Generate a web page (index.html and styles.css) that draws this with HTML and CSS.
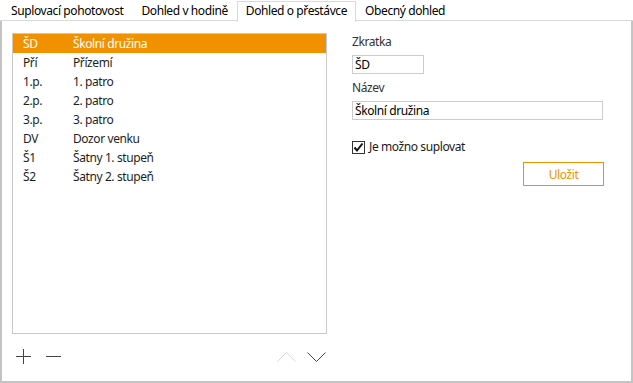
FILE: index.html
```html
<!DOCTYPE html>
<html lang="cs">
<head>
    <meta charset="UTF-8">
    <title>Dohled o přestávce</title>
    <link rel="stylesheet" href="styles.css">
</head>
<body>
    <div class="window">
        <div class="tabs">
            <div class="tab">Suplovací pohotovost</div>
            <div class="tab">Dohled v hodině</div>
            <div class="tab active">Dohled o přestávce</div>
            <div class="tab">Obecný dohled</div>
        </div>

        <div class="page">
            <div class="list-pane">
                <div class="list">
                    <div class="row selected"><span class="code">ŠD</span><span>Školní družina</span></div>
                    <div class="row"><span class="code">Pří</span><span>Přízemí</span></div>
                    <div class="row"><span class="code">1.p.</span><span>1. patro</span></div>
                    <div class="row"><span class="code">2.p.</span><span>2. patro</span></div>
                    <div class="row"><span class="code">3.p.</span><span>3. patro</span></div>
                    <div class="row"><span class="code">DV</span><span>Dozor venku</span></div>
                    <div class="row"><span class="code">Š1</span><span>Šatny 1. stupeň</span></div>
                    <div class="row"><span class="code">Š2</span><span>Šatny 2. stupeň</span></div>
                </div>

                <div class="list-tools">
                    <!-- add / remove -->
                    <button class="icon-btn add" title="Přidat">
                        <svg width="15" height="15" viewBox="0 0 15 15"><path d="M0 7.5H15M7.5 0V15" stroke="#444" stroke-width="1" fill="none"/></svg>
                    </button>
                    <button class="icon-btn remove" title="Odebrat">
                        <svg width="15" height="15" viewBox="0 0 15 15"><path d="M0 7.5H15" stroke="#444" stroke-width="1" fill="none"/></svg>
                    </button>
                    <!-- move up / down -->
                    <button class="icon-btn up" title="Nahoru" disabled>
                        <svg width="19" height="10" viewBox="0 0 19 10"><path d="M0.5 9.5L9.5 0.5L18.5 9.5" stroke="#d6d6d6" stroke-width="1" fill="none"/></svg>
                    </button>
                    <button class="icon-btn down" title="Dolů">
                        <svg width="19" height="10" viewBox="0 0 19 10"><path d="M0.5 0.5L9.5 9.5L18.5 0.5" stroke="#444" stroke-width="1" fill="none"/></svg>
                    </button>
                </div>
            </div>

            <div class="form">
                <label class="field-label" for="zkratka">Zkratka</label>
                <input class="field short" id="zkratka" type="text" value="ŠD">

                <label class="field-label" for="nazev">Název</label>
                <input class="field" id="nazev" type="text" value="Školní družina">

                <label class="check">
                    <span class="check-box">
                        <svg width="11" height="11" viewBox="0 0 11 11"><path d="M1.5 5.5L4 8.5L9.5 1.5" stroke="#111" stroke-width="2" fill="none"/></svg>
                    </span>
                    Je možno suplovat
                </label>

                <button class="save-btn">Uložit</button>
            </div>
        </div>
    </div>
</body>
</html>
```

FILE: styles.css
```css
body {
    margin: 0;
    font-family: 'Noto Sans', 'Open Sans', sans-serif;
    font-size: 12px;
    letter-spacing: -0.4px;
    color: #1a1a1a;
    background-color: #fff;
}

.window {
    width: 633px;
    height: 383px;
    display: flex;
    flex-direction: column;
    box-sizing: border-box;
}

/* Tab strip */
.tabs {
    height: 21px;
    display: flex;
    padding-left: 2px;
    border-bottom: 1px solid #d9d9d9;
    box-sizing: border-box;
}

.tab {
    height: 20px;
    line-height: 21px;
    padding: 0 9px;
    color: #000;
    white-space: nowrap;
}

.tab.active {
    height: 20px;
    line-height: 18px;
    margin-top: 1px;
    margin-bottom: -1px;
    padding: 0 8px;
    background-color: #fff;
    border: 1px solid #d9d9d9;
    border-bottom: none;
}

/* Page below the tabs */
.page {
    flex: 1;
    display: flex;
    border: 2px solid #c4c4c4;
    border-top: none;
}

.list-pane {
    padding: 12px 0 0 10px;
}

.list {
    width: 315px;
    height: 301px;
    border: 1px solid #c9c9c9;
    box-sizing: border-box;
}

.row {
    height: 19px;
    line-height: 19px;
    display: flex;
    padding-left: 10px;
    color: #1e1e1e;
}

.row .code {
    width: 50px;
}

.row.selected {
    background-color: #f29100;
    color: #fff;
}

.list-tools {
    display: flex;
    align-items: center;
    margin-top: 15px;
    padding-left: 4px;
}

.icon-btn {
    background: none;
    border: none;
    padding: 0;
    display: flex;
    cursor: pointer;
}

.icon-btn.remove {
    margin-left: 15px;
}

.icon-btn.up {
    margin-left: 216px;
    cursor: default;
}

.icon-btn.down {
    margin-left: 11px;
}

/* Detail form */
.form {
    width: 252px;
    margin-left: 25px;
    padding-top: 13px;
    display: flex;
    flex-direction: column;
    align-items: flex-start;
}

.field-label {
    line-height: 16px;
    color: #333;
}

.field {
    width: 251px;
    height: 19px;
    margin: 5px 0 6px 0;
    padding: 0 2px;
    border: 1px solid #cccccc;
    box-sizing: border-box;
    font-family: inherit;
    font-size: 12px;
    letter-spacing: inherit;
    color: #000;
    outline: none;
}

.field.short {
    width: 72px;
}

.check {
    display: flex;
    align-items: center;
    gap: 4px;
    margin-top: 13px;
    line-height: 16px;
    color: #1a1a1a;
}

.check-box {
    width: 13px;
    height: 13px;
    border: 1px solid #333;
    box-sizing: border-box;
    display: flex;
    align-items: center;
    justify-content: center;
}

.save-btn {
    align-self: flex-end;
    width: 81px;
    height: 24px;
    margin-top: 7px;
    background-color: #fff;
    border: 1px solid #f29100;
    color: #f29100;
    font-family: inherit;
    font-size: 12px;
    letter-spacing: inherit;
    cursor: pointer;
}
```
